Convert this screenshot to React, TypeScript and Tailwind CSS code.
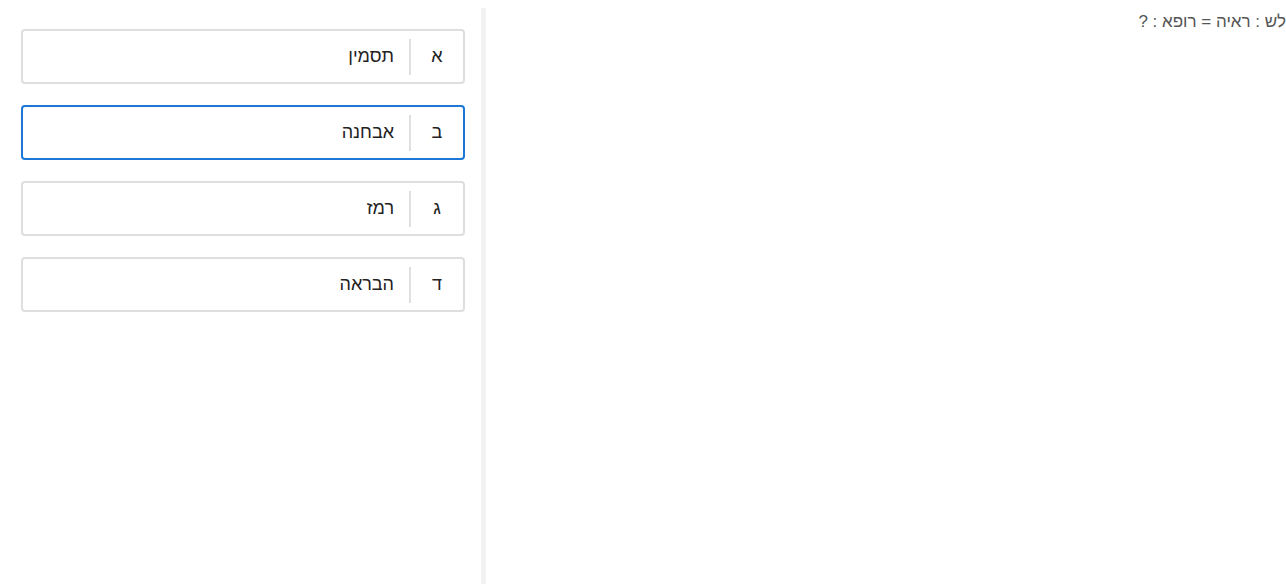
const ANSWERS = [
  { letter: 'א', text: 'תסמין' },
  { letter: 'ב', text: 'אבחנה' },
  { letter: 'ג', text: 'רמז' },
  { letter: 'ד', text: 'הבראה' },
]

export default function App() {
  const selected = 1
  return (
    <div dir="rtl" className="flex h-[584px] bg-white font-['Liberation_Sans',Arial,sans-serif] overflow-hidden">
      {/* question */}
      <div className="flex-1 pt-[9px] text-[17px] leading-[26px] text-[#555] whitespace-nowrap">
        לש : ראיה = רופא : ?
      </div>

      <div className="w-[5px] mt-2 bg-[#f2f2f2]" />

      {/* answers */}
      <div className="w-[481px] pt-[29px] pr-[16px] pl-[21px] flex flex-col gap-[21px]">
        {ANSWERS.map((a, i) => (
          <div
            key={a.letter}
            className={`h-[55px] flex items-center rounded-[4px] border-2 ${i === selected ? 'border-[#1b78d6]' : 'border-[#dedede]'}`}
          >
            <div className="w-[52px] text-center text-[18px] text-[#222]">{a.letter}</div>
            <div className="w-[2px] h-[36px] bg-[#e0e0e0]" />
            <div className="pr-[15px] text-[18px] text-[#222]">{a.text}</div>
          </div>
        ))}
      </div>
    </div>
  )
}
